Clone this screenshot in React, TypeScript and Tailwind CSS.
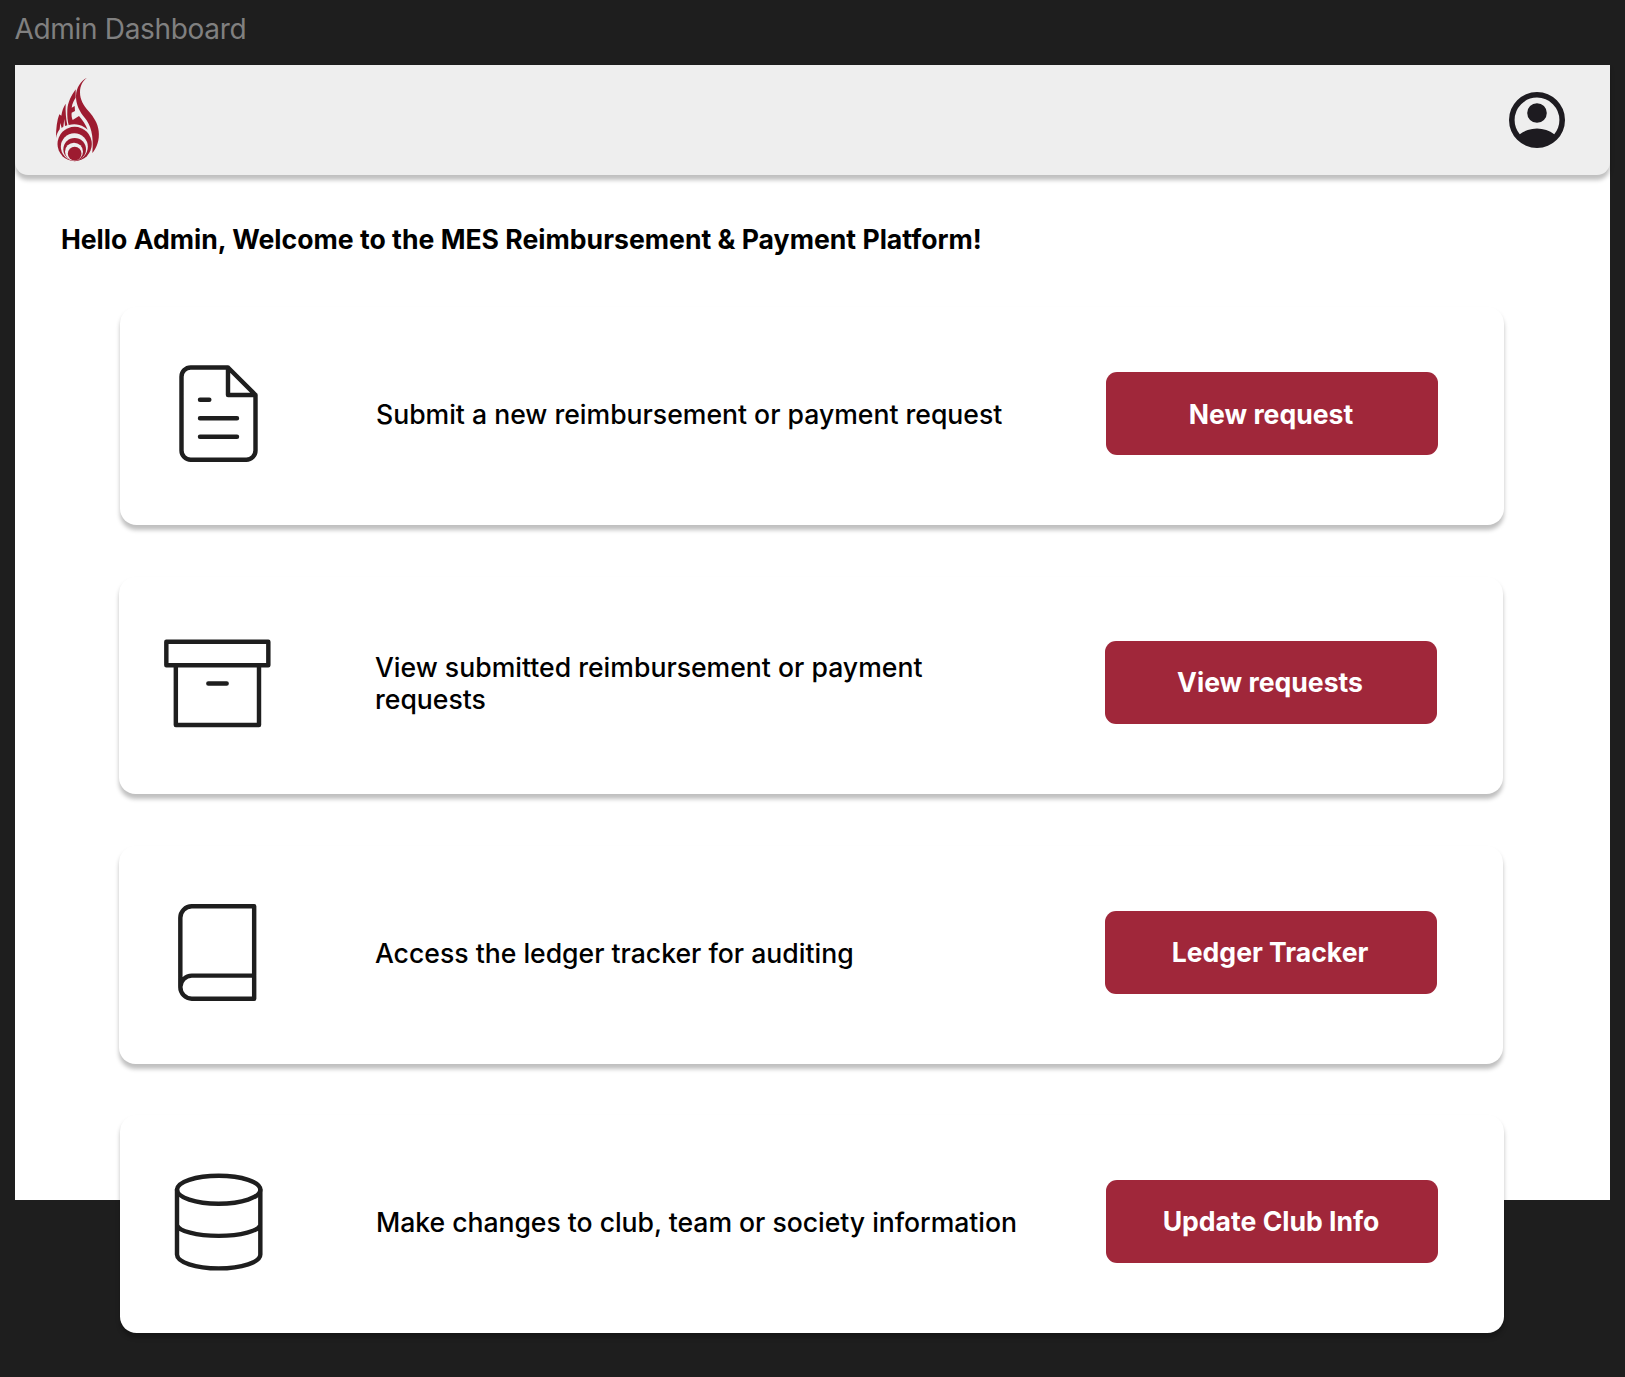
import type { ReactNode } from "react";

const stroke = {
  fill: "none",
  stroke: "#1e1e1e",
  strokeWidth: 13.3,
  strokeLinecap: "round",
  strokeLinejoin: "round",
} as const;

function FlameLogo() {
  return (
    <svg className="h-[110px] w-[80px] shrink-0" viewBox="0 0 240 330" fill="#9d1b30">
      <path d="M141 38C122 47 109 68 108 92C107 118 120 141 134 158C152 180 162 208 157 264C171 248 179 225 176 198C173 174 162 158 146 139C130 120 120 104 120 82C120 62 128 48 141 38Z" />
      <path d="M107 73C94 92 83 112 82 135C81 155 83 168 86 180C98 177 108 177 118 180C128 183 136 188 143 194C137 178 128 166 117 153L98 165C95 158 94 150 95 143L105 138L104 123L95 128C97 114 102 105 107 98Z" />
      <path d="M77 116C70 126 66 138 64 152L58 148C51 166 48 190 48 219C50 208 54 200 59 193L61 174L65 189L70 185L73 162L75 183L82 181C78 160 76 140 77 116Z" />
      <circle cx="104" cy="237" r="51.500" />
      <circle cx="103" cy="245.500" r="40.500" fill="#eee" />
      <circle cx="104" cy="253" r="34" />
      <circle cx="102" cy="260" r="27" fill="#eee" />
      <circle cx="104" cy="266" r="20.500" />
    </svg>
  );
}

function AccountIcon() {
  return (
    <svg className="size-[56px] shrink-0" viewBox="2 2 20 20" fill="#1d1b20">
      <path d="M5.85 17.1q1.275-.975 2.85-1.537T12 15t3.3.563 2.85 1.537q.875-1.025 1.363-2.325T20 12q0-3.325-2.337-5.662T12 4 6.338 6.338 4 12q0 1.475.488 2.775T5.85 17.1M12 13q-1.475 0-2.488-1.012T8.5 9.5t1.012-2.488T12 6t2.488 1.012T15.5 9.5t-1.012 2.488T12 13m0 9q-2.075 0-3.9-.788t-3.175-2.137-2.137-3.175T2 12t.788-3.9 2.137-3.175T8.1 2.788 12 2t3.9.788 3.175 2.137T21.213 8.1 22 12t-.788 3.9-2.137 3.175-3.175 2.138T12 22" />
    </svg>
  );
}

function DocumentIcon() {
  return (
    <svg className="size-[120px] shrink-0" viewBox="174 192.500 360 360" {...stroke}>
      <path d="M384 233H272a27.500 27.500 0 0 0-27.500 27.500V482a27.500 27.500 0 0 0 27.500 27.500H439A27.500 27.500 0 0 0 466.500 482V315.500ZV315.500H466.500M300 330H328M300 385.500H411M300 441H411" />
    </svg>
  );
}

function ArchiveIcon() {
  return (
    <svg className="size-[120px] shrink-0" viewBox="171 158.500 360 360" {...stroke}>
      <path d="M199 215H505V285H199ZM227.500 285V464.500H477V285M325 340H380" />
    </svg>
  );
}

function BookIcon() {
  return (
    <svg className="size-[120px] shrink-0" viewBox="171 156.700 360 360" {...stroke}>
      <path d="M241 442V234.500A34.500 34.500 0 0 1 275.500 199.500H462.500V477H275.500A35 35 0 0 1 241 442A35 35 0 0 1 275.500 407.500H462.500" />
    </svg>
  );
}

function DatabaseIcon() {
  return (
    <svg className="size-[120px] shrink-0" viewBox="174 156.300 360 360" {...stroke}>
      <ellipse cx="356" cy="239.500" rx="125" ry="42" />
      <path d="M231 239.500V434C231 457 287 475.500 356 475.500S481 457 481 434V239.500M231 345C235 363 290 378 356 378S477 363 481 345" />
    </svg>
  );
}

type RowProps = {
  icon: ReactNode;
  text: string;
  action: string;
  indent: string;
  textPad?: string;
  actionPad?: string;
};

function ActionCard({ icon, text, action, indent, textPad = "", actionPad = "" }: RowProps) {
  return (
    <section
      className={`flex h-[217.700px] w-[1384.700px] items-center rounded-[16.600px] bg-white pb-[5px] pl-[38.200px] shadow-[0_4.400px_4.400px_rgba(0,0,0,0.25)] ${indent}`}
    >
      {icon}
      <p className={`ml-[98px] w-[650px] text-[26.590px] leading-[32.200px] font-medium text-black ${textPad}`}>{text}</p>
      <button
        className={`ml-[79.700px] h-[83px] w-[332.300px] rounded-[11px] bg-[#a0273a] pr-[1.600px] text-[26.590px] leading-[32.200px] font-bold text-white ${actionPad}`}
      >
        {action}
      </button>
    </section>
  );
}

export default function App() {
  return (
    <div className="h-[1377px] w-[1625px] overflow-hidden bg-[#1e1e1e] pl-[14.500px] font-['Inter',sans-serif]">
      <div className="flex h-[64.700px] items-start pt-[12px] text-[28px] leading-[34px] tracking-[-0.320px] text-[#808080]">
        Admin Dashboard
      </div>
      <main className="h-[1135px] w-[1595.500px] bg-white">
        <header className="flex h-[110.800px] items-center justify-between rounded-b-[13px] bg-[#eee] pr-[45.300px] pl-[25.300px] shadow-[0_4.400px_4.400px_rgba(0,0,0,0.25)]">
          <FlameLogo />
          <AccountIcon />
        </header>
        <h1 className="mt-[48px] ml-[46.400px] text-[26.590px] leading-[32.200px] font-bold tracking-[0.020px] text-black">
          Hello Admin, Welcome to the MES Reimbursement &amp; Payment Platform!
        </h1>
        <div className="mt-[51.500px] flex flex-col gap-[51.700px]">
          <ActionCard
            icon={<DocumentIcon />}
            text="Submit a new reimbursement or payment request"
            action="New request"
            indent="ml-[105.300px]"
            textPad="pt-[1.200px]"
            actionPad="pt-[1.200px]"
          />
          <ActionCard
            icon={<ArchiveIcon />}
            text="View submitted reimbursement or payment requests"
            action="View requests"
            indent="ml-[104.300px]"
            textPad="tracking-[0.010px]"
            actionPad="pb-[1.600px]"
          />
          <ActionCard
            icon={<BookIcon />}
            text="Access the ledger tracker for auditing"
            action="Ledger Tracker"
            indent="ml-[104.300px]"
            textPad="pt-[1.200px]"
          />
          <ActionCard
            icon={<DatabaseIcon />}
            text="Make changes to club, team or society information"
            action="Update Club Info"
            indent="ml-[105.300px]"
            textPad="pt-[1.200px] tracking-[-0.030px]"
            actionPad="pb-[1.600px]"
          />
        </div>
      </main>
    </div>
  );
}
